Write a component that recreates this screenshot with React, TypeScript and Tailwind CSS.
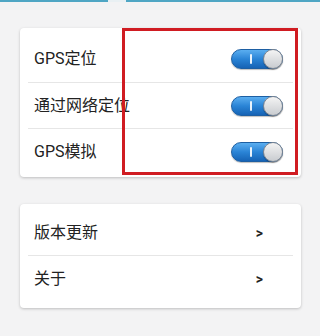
import React from "react";

function Toggle() {
  return (
    <div className="flex items-center h-[20px] w-[52px] rounded-full border border-[#1d5fa3] bg-gradient-to-b from-[#5aaef0] via-[#2a84d6] to-[#1663b5] shadow-[0_1px_1px_rgba(0,0,0,0.25)]">
      <div className="ml-[18px] h-[10px] w-[2px] rounded-sm bg-white/90" />
      <div className="ml-auto h-[20px] w-[20px] -mr-px rounded-full border border-[#7d8590] bg-gradient-to-b from-[#f4f4f4] to-[#c9ccd0] shadow-[0_1px_1px_rgba(0,0,0,0.3)]" />
    </div>
  );
}

function Divider() {
  return <div className="mx-[8px] h-px bg-[#e6e6e6]" />;
}

export default function App() {
  const font = { fontFamily: 'Roboto, "Noto Sans CJK SC", sans-serif' };
  return (
    <div className="w-[320px] h-[336px] bg-[#f3f3f4] overflow-hidden relative" style={font}>
      <div className="flex h-[2px]">
        <div className="w-[108px] bg-[#4fa6c4]" />
        <div className="w-[18px] bg-[#e9f0f3]" />
        <div className="flex-1 bg-[#4fa6c4]" />
      </div>

      <div className="ml-[20px] mt-[26px] w-[281px] rounded-[4px] bg-white pt-[8px] pb-[2px] shadow-[0_1px_3px_rgba(0,0,0,0.22)]">
        <div className="flex h-[46px] items-center pl-[14px] pr-[18px]">
          <span className="text-[16px] text-[#222]">GPS定位</span>
          <div className="ml-auto"><Toggle /></div>
        </div>
        <Divider />
        <div className="flex h-[45px] items-center pl-[14px] pr-[18px]">
          <span className="text-[16px] text-[#222]">通过网络定位</span>
          <div className="ml-auto"><Toggle /></div>
        </div>
        <Divider />
        <div className="flex h-[46px] items-center pl-[14px] pr-[18px]">
          <span className="text-[16px] text-[#222]">GPS模拟</span>
          <div className="ml-auto"><Toggle /></div>
        </div>
      </div>

      <div className="ml-[20px] mt-[27px] w-[281px] rounded-[4px] bg-white pt-[7px] pb-[6px] shadow-[0_1px_3px_rgba(0,0,0,0.22)]">
        <div className="flex h-[44px] items-center pl-[14px] pr-[38px]">
          <span className="text-[16px] text-[#222]">版本更新</span>
          <span className="ml-auto text-[14px] font-bold text-[#222]">&gt;</span>
        </div>
        <Divider />
        <div className="flex h-[46px] items-center pl-[14px] pr-[38px]">
          <span className="text-[16px] text-[#222]">关于</span>
          <span className="ml-auto text-[14px] font-bold text-[#222]">&gt;</span>
        </div>
      </div>

      <div className="absolute left-[122px] top-[28px] w-[176px] h-[147px] border-[3px] border-[#d01c22]" />
    </div>
  );
}
